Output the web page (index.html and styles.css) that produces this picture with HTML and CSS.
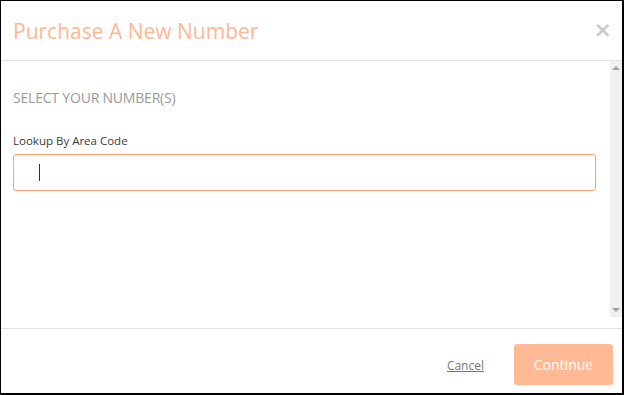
FILE: index.html
```html
<!DOCTYPE html>
<html lang="en">
<head>
    <meta charset="UTF-8">
    <meta name="viewport" content="width=device-width, initial-scale=1.0">
    <title>Purchase A New Number</title>
    <link rel="stylesheet" href="styles.css">
</head>
<body>
    <div class="modal">
        <header class="modal-header">
            <h1>Purchase A New Number</h1>
            <span class="close">&times;</span>
        </header>

        <div class="modal-body">
            <div class="body-content">
                <h2>SELECT YOUR NUMBER(S)</h2>
                <label class="field-label">Lookup By Area Code</label>
                <div class="field">
                    <span class="caret"></span>
                </div>
            </div>
            <div class="scrollbar">
                <span class="arrow up"></span>
                <span class="arrow down"></span>
            </div>
        </div>

        <footer class="modal-footer">
            <a href="#" class="cancel">Cancel</a>
            <button class="continue">Continue</button>
        </footer>
    </div>
</body>
</html>
```

FILE: styles.css
```css
* {
    box-sizing: border-box;
}

body {
    margin: 0;
    padding: 0;
    font-family: "Open Sans", "Noto Sans", sans-serif;
    background-color: #fff;
}

.modal {
    width: 624px;
    height: 395px;
    border: 1px solid #000;
    border-right-width: 2px;
    border-bottom-width: 2px;
    display: flex;
    flex-direction: column;
    background-color: #fff;
}

.modal-header {
    height: 60px;
    flex: none;
    border-bottom: 1px solid #e3e3e3;
    display: flex;
    align-items: center;
    justify-content: space-between;
    padding: 0 10px 0 12px;
}

.modal-header h1 {
    margin: 0;
    font-size: 21px;
    font-weight: 400;
    color: #ffb793;
}

.close {
    font-family: "DejaVu Sans", sans-serif;
    font-size: 22px;
    font-weight: bold;
    color: #c9c9c9;
    line-height: 1;
    margin-top: -2px;
}

.modal-body {
    height: 256px;
    flex: none;
    display: flex;
}

.body-content {
    flex: 1;
    padding: 27px 14px 0 12px;
}

.body-content h2 {
    margin: 0;
    font-size: 14px;
    line-height: 19px;
    font-weight: 400;
    color: #9a9a9a;
    letter-spacing: -0.2px;
}

.field-label {
    display: block;
    margin-top: 26px;
    font-size: 11.5px;
    line-height: 15px;
    font-weight: 500;
    color: #3a3a3a;
}

.field {
    margin-top: 6px;
    height: 37px;
    border: 1px solid #ffa46f;
    border-radius: 3px;
    display: flex;
    align-items: center;
    padding-left: 25px;
}

.caret {
    width: 1px;
    height: 17px;
    background-color: #333;
}

.scrollbar {
    width: 12px;
    flex: none;
    background-color: #f0f0f0;
    display: flex;
    flex-direction: column;
    justify-content: space-between;
    align-items: center;
    padding: 5px 0;
}

.arrow {
    width: 0;
    height: 0;
    border-left: 4px solid transparent;
    border-right: 4px solid transparent;
}

.arrow.up {
    border-bottom: 4px solid #a3a3a3;
}

.arrow.down {
    border-top: 4px solid #a3a3a3;
}

.modal-footer {
    flex: 1;
    margin-top: 11px;
    border-top: 1px solid #e3e3e3;
    display: flex;
    justify-content: flex-end;
    align-items: flex-start;
    gap: 30px;
    padding: 15px 9px 0 0;
}

.cancel {
    font-size: 12px;
    color: #777;
    margin-top: 13px;
    text-decoration: underline;
}

.continue {
    width: 99px;
    height: 41px;
    border: none;
    border-radius: 3px;
    background-color: #ffba95;
    color: #fff;
    font-family: "Open Sans", sans-serif;
    font-size: 14px;
}
```
